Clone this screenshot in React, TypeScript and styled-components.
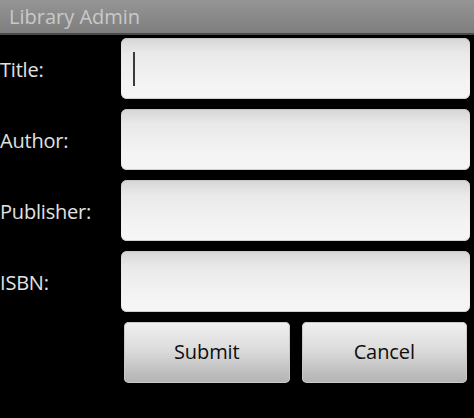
import React from 'react'
import styled, { createGlobalStyle } from 'styled-components'

const GlobalStyle = createGlobalStyle`
  html, body {
    margin: 0;
    padding: 0;
    background: #000;
  }
  body {
    font-family: "Open Sans", "DejaVu Sans", sans-serif;
  }
`

const Screen = styled.div`
  width: 474px;
  height: 418px;
  background: #000;
  overflow: hidden;
`

const TitleBar = styled.div`
  height: 33px;
  display: flex;
  align-items: center;
  padding-left: 9px;
  background: linear-gradient(#959595, #7e7e7e);
  border-bottom: 2px solid #4a4a4a;
  color: #c9c9c9;
  font-size: 20px;
`

const Form = styled.div`
  display: grid;
  grid-template-columns: 121px 1fr;
  grid-auto-rows: 61px;
  row-gap: 10px;
  padding: 3px 4px 0 0;
`

const Label = styled.label`
  display: flex;
  align-items: center;
  color: #e2e2e2;
  font-size: 20px;
  letter-spacing: -0.2px;
  padding-top: 2px;
`

const Field = styled.div`
  display: flex;
  align-items: center;
  padding-left: 12px;
  border-radius: 6px;
  background: linear-gradient(#d6d6d6 0%, #e9e9e9 25%, #f3f3f3 70%, #f6f6f6 100%);
  box-shadow: inset 0 -1px 0 #cfcfcf, inset 0 1px 1px #c6c6c6;
`

const Caret = styled.span`
  width: 2px;
  height: 34px;
  background: #3a3a3a;
`

const Buttons = styled.div`
  grid-column: 2;
  display: grid;
  grid-template-columns: 1fr 1fr;
  column-gap: 12px;
  padding: 0 3px;
`

const Button = styled.button`
  border: none;
  border-radius: 5px;
  background: linear-gradient(#f0f0f0 0%, #dcdcdc 45%, #bdbdbd 85%, #b3b3b3 100%);
  box-shadow: inset 0 0 0 1px #c9c9c9;
  color: #0e0e0e;
  font-family: "Open Sans", "DejaVu Sans", sans-serif;
  font-size: 20px;
  letter-spacing: -0.1px;
  padding: 0 0 2px 0;
`

const fields = ['Title:', 'Author:', 'Publisher:', 'ISBN:']

export default function App() {
  return (
    <Screen>
      <GlobalStyle />
      <TitleBar>Library Admin</TitleBar>
      <Form>
        {fields.map((f, i) => (
          <React.Fragment key={f}>
            <Label>{f}</Label>
            <Field>{i === 0 && <Caret />}</Field>
          </React.Fragment>
        ))}
        <Buttons>
          <Button>Submit</Button>
          <Button>Cancel</Button>
        </Buttons>
      </Form>
    </Screen>
  )
}
